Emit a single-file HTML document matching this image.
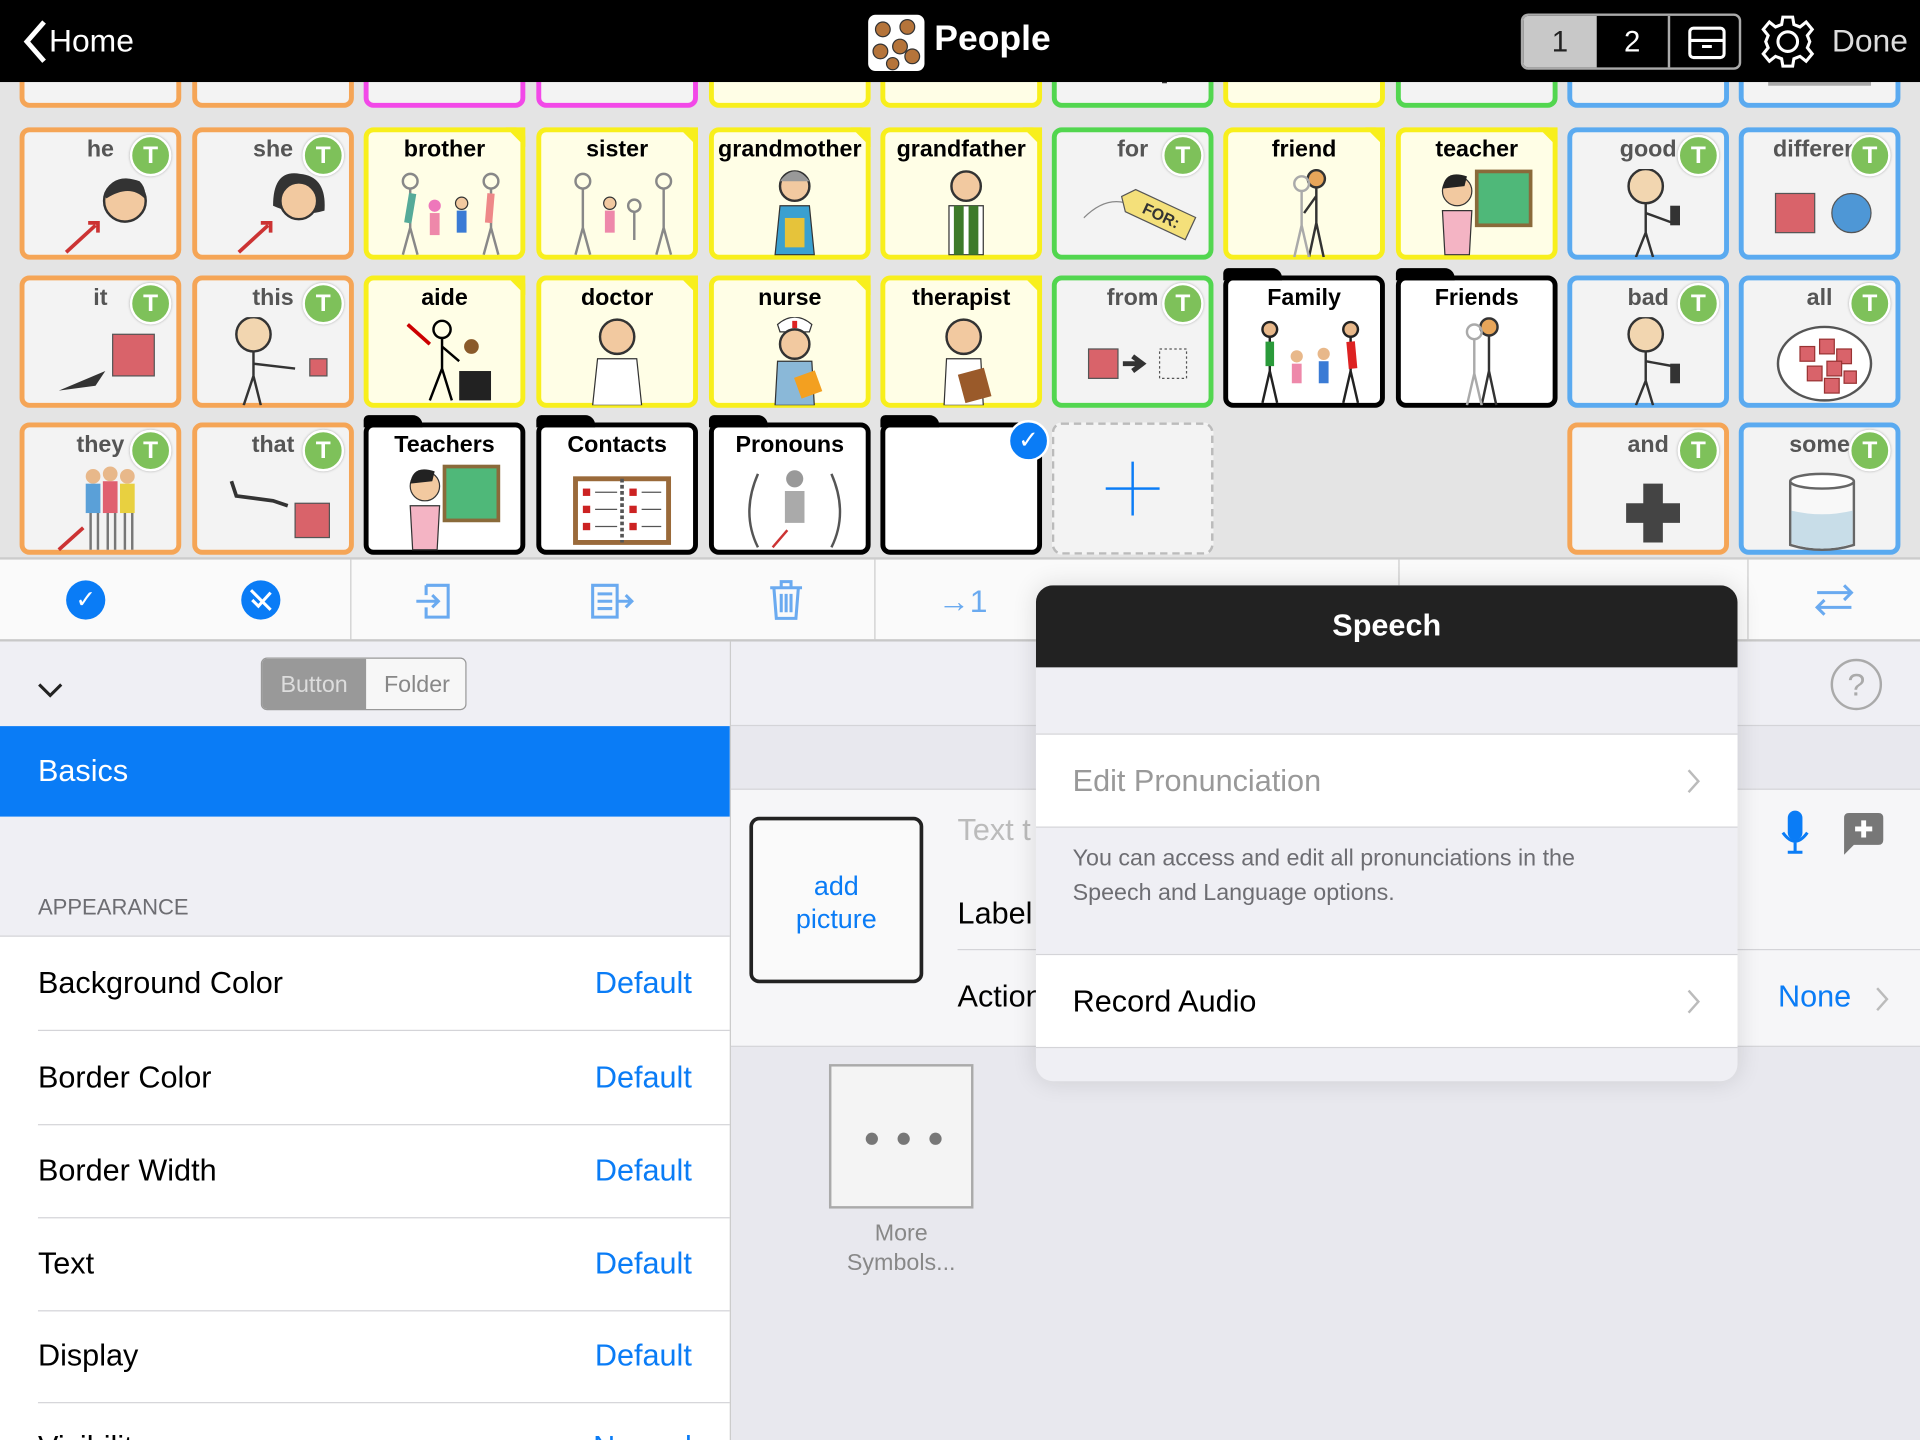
<!DOCTYPE html>
<html><head><meta charset="utf-8">
<style>
html,body{margin:0;padding:0;width:1920px;height:1440px;overflow:hidden;background:#e6e6e6}
#w{position:absolute;left:0;top:0;width:1568px;height:1176px;transform:scale(1.22449);transform-origin:0 0;overflow:hidden;font-family:"Liberation Sans",sans-serif;background:#e4e4e4}
.a{position:absolute}
.c{position:absolute;width:124px;height:100px;border:4px solid #f4a55a;border-radius:8px;background:#f3f3f3;box-sizing:content-box}
.c .l{position:absolute;left:0;right:0;top:4px;text-align:center;font-weight:bold;font-size:19px;color:#000}
.o{border-color:#f5a556}.o .l,.g .l,.b .l{color:#555}
.y{border-color:#f8ef1c;background:#fffee6}
.p{border-color:#f248e8;background:#f3f3f3}
.g{border-color:#52d64f}
.b{border-color:#5aaaf0}
.f{border-color:#000;background:#fff}
.f:before{content:"";position:absolute;left:-4px;top:-10px;width:48px;height:10px;background:#000;border-radius:4px 8px 0 0}
.t{position:absolute;right:4px;top:2px;width:30px;height:30px;border-radius:50%;background:#7ec15a;border:2px solid #fff;color:#fff;font-weight:bold;font-size:20px;text-align:center;line-height:30px;box-shadow:0 0 2px #aaa}
.y:after{content:"";position:absolute;right:-4px;top:-4px;border-style:solid;border-width:0 16px 16px 0;border-color:transparent #f8ef1c transparent transparent;transform:scaleX(1)}
svg.i{position:absolute;left:22px;top:30px}
.row{position:absolute;left:31px;width:565px;height:76px;border-bottom:1px solid #d4d4d8;font-size:25px;line-height:76px;color:#000}
.row span{position:absolute;right:31px;color:#0a7cf6}
</style></head><body><div id="w">

<!-- top partial row -->
<div class="c o" style="left:16px;top:-20px"></div>
<div class="c o" style="left:157px;top:-20px"></div>
<div class="c p" style="left:297px;top:-20px"><div class="a" style="left:82px;top:60px;width:22px;height:20px;background:#d9575a"></div></div>
<div class="c p" style="left:438px;top:-20px"><div class="a" style="left:60px;top:58px;width:24px;height:18px;background:#d9575a;transform:rotate(30deg)"></div></div>
<div class="c y" style="left:579px;top:-20px"></div>
<div class="c y" style="left:719px;top:-20px"></div>
<div class="c g" style="left:859px;top:-20px"><div class="a" style="left:86px;top:60px;width:4px;height:24px;background:#333"></div></div>
<div class="c y" style="left:999px;top:-20px"><div class="a" style="left:64px;top:58px;width:16px;height:22px;background:#d9575a"></div></div>
<div class="c g" style="left:1140px;top:-20px"><div class="a" style="left:46px;top:64px;width:36px;height:10px;background:#444"></div></div>
<div class="c b" style="left:1280px;top:-20px"><div class="a" style="left:70px;top:60px;width:24px;height:22px;border-radius:50%;background:#f4e88a"></div></div>
<div class="c b" style="left:1420px;top:-20px"><div class="a" style="left:20px;top:56px;width:84px;height:30px;background:#aaa"></div></div>

<!-- row 2 -->
<div class="c o" style="left:16px;top:104px"><div class="l">he</div><div class="t">T</div>
<svg class="i" width="90" height="70"><circle cx="60" cy="26" r="17" fill="#f2c9a0" stroke="#333" stroke-width="2"/><path d="M43 22 Q50 2 72 10 Q78 16 76 24 Q64 12 45 24Z" fill="#333"/><path d="M12 68 L36 46" stroke="#c33" stroke-width="3"/><path d="M30 44 L38 44 L38 52" fill="none" stroke="#c33" stroke-width="3"/></svg></div>
<div class="c o" style="left:157px;top:104px"><div class="l">she</div><div class="t">T</div>
<svg class="i" width="90" height="70"><path d="M40 30 Q40 0 62 4 Q84 6 82 34 Q62 40 40 30Z" fill="#333"/><circle cx="61" cy="26" r="15" fill="#f2c9a0" stroke="#333" stroke-width="2"/><path d="M12 68 L36 46" stroke="#c33" stroke-width="3"/><path d="M30 44 L38 44 L38 52" fill="none" stroke="#c33" stroke-width="3"/></svg></div>
<div class="c y" style="left:297px;top:104px"><div class="l">brother</div>
<svg class="i" width="90" height="72"><g stroke="#888" stroke-width="2" fill="none"><circle cx="12" cy="10" r="6"/><path d="M12 16 V48 M12 48 L6 70 M12 48 L18 70"/><circle cx="78" cy="10" r="6"/><path d="M78 16 V48 M78 48 L72 70 M78 48 L84 70"/></g><circle cx="32" cy="30" r="5" fill="#e7b"/><rect x="28" y="36" width="8" height="18" fill="#e8a"/><circle cx="54" cy="28" r="5" fill="#f2c9a0" stroke="#333"/><rect x="50" y="34" width="8" height="18" fill="#3a7bd5"/><path d="M14 20 L10 44" stroke="#5a9" stroke-width="6"/><path d="M78 20 L76 44" stroke="#e88" stroke-width="6"/></svg></div>
<div class="c y" style="left:438px;top:104px"><div class="l">sister</div>
<svg class="i" width="90" height="72"><g stroke="#888" stroke-width="2" fill="none"><circle cx="12" cy="10" r="6"/><path d="M12 16 V48 M12 48 L6 70 M12 48 L18 70"/><circle cx="78" cy="10" r="6"/><path d="M78 16 V48 M78 48 L72 70 M78 48 L84 70"/><circle cx="54" cy="30" r="5"/><path d="M54 35 V58"/></g><circle cx="34" cy="28" r="5" fill="#f2c9a0" stroke="#333"/><rect x="30" y="34" width="8" height="18" fill="#e8a"/></svg></div>
<div class="c y" style="left:579px;top:104px"><div class="l">grandmother</div>
<svg class="i" width="90" height="72"><circle cx="44" cy="14" r="12" fill="#f2c9a0" stroke="#333" stroke-width="2"/><path d="M32 10 Q44 -6 56 10" fill="#999"/><path d="M32 30 L56 30 L60 70 L28 70Z" fill="#3aa0d0" stroke="#333"/><rect x="36" y="40" width="16" height="24" fill="#e6c33a"/></svg></div>
<div class="c y" style="left:719px;top:104px"><div class="l">grandfather</div>
<svg class="i" width="90" height="72"><circle cx="44" cy="14" r="12" fill="#f2c9a0" stroke="#333" stroke-width="2"/><path d="M30 30 L58 30 L58 70 L30 70Z" fill="#fff" stroke="#333"/><path d="M34 30 L42 30 L42 70 L34 70Z M46 30 L54 30 L54 70 L46 70Z" fill="#3d7a2a"/></svg></div>
<div class="c g" style="left:859px;top:104px"><div class="l">for</div><div class="t">T</div>
<svg class="i" width="100" height="70"><path d="M0 40 Q20 20 40 30" stroke="#888" fill="none"/><g transform="rotate(25 60 36)"><path d="M36 26 L90 26 L90 46 L36 46 L28 36Z" fill="#f4e07a" stroke="#555"/><text x="48" y="41" font-size="13" font-weight="bold" fill="#333" font-family="Liberation Sans">FOR:</text></g></svg></div>
<div class="c y" style="left:999px;top:104px"><div class="l">friend</div>
<svg class="i" width="90" height="72"><g stroke="#333" stroke-width="2" fill="none"><circle cx="50" cy="8" r="7" fill="#e8a65a"/><path d="M50 15 V44 L44 72 M50 44 L56 72 M50 22 L40 36"/><circle cx="38" cy="12" r="6" stroke="#aaa"/><path d="M38 18 V46 L32 72 M38 46 L44 72" stroke="#aaa"/></g></svg></div>
<div class="c y" style="left:1140px;top:104px"><div class="l">teacher</div>
<svg class="i" width="90" height="72"><rect x="40" y="2" width="44" height="44" fill="#4fb879" stroke="#8a6a3a" stroke-width="3"/><circle cx="24" cy="18" r="12" fill="#f2c9a0" stroke="#333"/><path d="M12 16 Q14 0 32 6 L30 14Z" fill="#222"/><path d="M12 34 L36 34 L34 70 L14 70Z" fill="#f4b4c4" stroke="#333"/></svg></div>
<div class="c b" style="left:1280px;top:104px"><div class="l">good</div><div class="t">T</div>
<svg class="i" width="90" height="72"><g stroke="#333" stroke-width="2" fill="none"><circle cx="38" cy="14" r="14" fill="#f2d6b0"/><path d="M38 28 V52 L30 72 M38 52 L44 72 M38 36 L60 44"/></g><rect x="58" y="30" width="8" height="16" fill="#333"/></svg></div>
<div class="c b" style="left:1420px;top:104px"><div class="l">different</div><div class="t">T</div>
<svg class="i" width="90" height="72"><rect x="4" y="20" width="32" height="32" fill="#d9636a" stroke="#555"/><ellipse cx="66" cy="36" rx="16" ry="16" fill="#4e97d6" stroke="#555"/></svg></div>

<!-- row 3 -->
<div class="c o" style="left:16px;top:225px"><div class="l">it</div><div class="t">T</div>
<svg class="i" width="90" height="72"><rect x="50" y="14" width="34" height="34" fill="#d9636a" stroke="#555"/><path d="M6 60 L44 44 L36 56Z" fill="#333"/></svg></div>
<div class="c o" style="left:157px;top:225px"><div class="l">this</div><div class="t">T</div>
<svg class="i" width="90" height="72"><g stroke="#333" stroke-width="2" fill="none"><circle cx="24" cy="14" r="14" fill="#f2d6b0"/><path d="M24 28 V48 L16 72 M24 48 L30 72 M24 38 L58 42"/></g><rect x="70" y="34" width="14" height="14" fill="#d9636a" stroke="#555"/></svg></div>
<div class="c y" style="left:297px;top:225px"><div class="l">aide</div>
<svg class="i" width="90" height="72"><g stroke="#000" stroke-width="2" fill="none"><circle cx="38" cy="10" r="7"/><path d="M38 17 V42 L28 68 M38 42 L46 68 M38 24 L52 36 M10 6 L28 22" /></g><path d="M10 6 L28 22" stroke="#c00" stroke-width="3"/><circle cx="62" cy="24" r="6" fill="#8a5a2a"/><rect x="52" y="44" width="26" height="24" fill="#222"/></svg></div>
<div class="c y" style="left:438px;top:225px"><div class="l">doctor</div>
<svg class="i" width="90" height="72"><circle cx="40" cy="16" r="14" fill="#f2c9a0" stroke="#333" stroke-width="2"/><path d="M24 34 L56 34 L60 72 L20 72Z" fill="#fff" stroke="#333"/></svg></div>
<div class="c y" style="left:579px;top:225px"><div class="l">nurse</div>
<svg class="i" width="90" height="72"><path d="M30 6 Q44 -6 58 6 L56 12 L32 12Z" fill="#fff" stroke="#333"/><path d="M42 3 h4 v6 h-4z" fill="#d22"/><circle cx="44" cy="22" r="12" fill="#f2c9a0" stroke="#333" stroke-width="2"/><path d="M30 36 L58 36 L60 72 L28 72Z" fill="#8ab8d8" stroke="#333"/><rect x="46" y="46" width="18" height="18" fill="#f3a020" transform="rotate(-20 55 55)"/></svg></div>
<div class="c y" style="left:719px;top:225px"><div class="l">therapist</div>
<svg class="i" width="90" height="72"><circle cx="42" cy="16" r="14" fill="#f2c9a0" stroke="#333" stroke-width="2"/><path d="M28 34 L56 34 L58 72 L26 72Z" fill="#fff" stroke="#333"/><rect x="40" y="44" width="22" height="24" fill="#9a5a2a" transform="rotate(-15 50 56)"/></svg></div>
<div class="c g" style="left:859px;top:225px"><div class="l">from</div><div class="t">T</div>
<svg class="i" width="90" height="72"><rect x="4" y="26" width="24" height="24" fill="#d9636a" stroke="#555"/><path d="M32 38 H46 M40 32 L48 38 L40 44" stroke="#333" stroke-width="4" fill="none"/><rect x="62" y="26" width="22" height="24" fill="none" stroke="#555" stroke-dasharray="2 2"/></svg></div>
<div class="c f" style="left:999px;top:225px"><div class="l">Family</div>
<svg class="i" width="90" height="72"><g stroke="#222" stroke-width="2" fill="none"><circle cx="12" cy="10" r="6" fill="#e8b88a"/><path d="M12 16 V44 L6 70 M12 44 L18 70"/><circle cx="78" cy="10" r="6" fill="#e8b88a"/><path d="M78 16 V44 L72 70 M78 44 L84 70"/></g><path d="M12 20 V40" stroke="#2a9a3a" stroke-width="7"/><path d="M78 20 L80 42" stroke="#d22" stroke-width="7"/><circle cx="34" cy="32" r="5" fill="#e8b88a"/><rect x="30" y="38" width="8" height="16" fill="#e8a"/><circle cx="56" cy="30" r="5" fill="#e8b88a"/><rect x="52" y="36" width="8" height="18" fill="#3a7bd5"/></svg></div>
<div class="c f" style="left:1140px;top:225px"><div class="l">Friends</div>
<svg class="i" width="90" height="72"><g stroke="#333" stroke-width="2" fill="none"><circle cx="50" cy="8" r="7" fill="#e8a65a"/><path d="M50 15 V44 L44 72 M50 44 L56 72"/><circle cx="38" cy="12" r="6" stroke="#aaa"/><path d="M38 18 V46 L32 72 M38 46 L44 72" stroke="#aaa"/></g></svg></div>
<div class="c b" style="left:1280px;top:225px"><div class="l">bad</div><div class="t">T</div>
<svg class="i" width="90" height="72"><g stroke="#333" stroke-width="2" fill="none"><circle cx="38" cy="14" r="14" fill="#f2d6b0"/><path d="M38 28 V52 L30 72 M38 52 L44 72 M38 36 L60 40"/></g><rect x="58" y="38" width="8" height="16" fill="#333"/></svg></div>
<div class="c b" style="left:1420px;top:225px"><div class="l">all</div><div class="t">T</div>
<svg class="i" width="90" height="72"><ellipse cx="44" cy="38" rx="38" ry="30" fill="#fff" stroke="#555" stroke-width="2"/><g fill="#d9636a" stroke="#933"><rect x="24" y="24" width="12" height="12"/><rect x="40" y="18" width="12" height="12"/><rect x="54" y="26" width="12" height="12"/><rect x="30" y="40" width="12" height="12"/><rect x="46" y="36" width="12" height="12"/><rect x="44" y="50" width="12" height="12"/><rect x="60" y="44" width="10" height="10"/></g></svg></div>

<!-- row 4 -->
<div class="c o" style="left:16px;top:345px"><div class="l">they</div><div class="t">T</div>
<svg class="i" width="90" height="72"><circle cx="34" cy="10" r="6" fill="#e8b88a"/><circle cx="48" cy="8" r="6" fill="#e8b88a"/><circle cx="62" cy="10" r="6" fill="#e8b88a"/><rect x="28" y="16" width="12" height="24" fill="#5aa0d8"/><rect x="42" y="14" width="12" height="26" fill="#e06070"/><rect x="56" y="16" width="12" height="24" fill="#e8d040"/><path d="M32 40 V70 M38 40 V70 M46 40 V70 M52 40 V70 M60 40 V70 M66 40 V70" stroke="#777" stroke-width="2"/><path d="M6 70 L26 52" stroke="#c33" stroke-width="3"/></svg></div>
<div class="c o" style="left:157px;top:345px"><div class="l">that</div><div class="t">T</div>
<svg class="i" width="90" height="72"><path d="M6 14 L10 26 L40 30 L52 34" stroke="#333" stroke-width="3" fill="none"/><rect x="58" y="32" width="28" height="28" fill="#d9636a" stroke="#555"/></svg></div>
<div class="c f" style="left:297px;top:345px"><div class="l">Teachers</div>
<svg class="i" width="90" height="72"><rect x="40" y="2" width="44" height="44" fill="#4fb879" stroke="#8a6a3a" stroke-width="3"/><circle cx="24" cy="18" r="12" fill="#f2c9a0" stroke="#333"/><path d="M12 16 Q14 0 32 6 L30 14Z" fill="#222"/><path d="M12 34 L36 34 L34 70 L14 70Z" fill="#f4b4c4" stroke="#333"/></svg></div>
<div class="c f" style="left:438px;top:345px"><div class="l">Contacts</div>
<svg class="i" width="90" height="72"><rect x="4" y="10" width="80" height="56" fill="#9a6a3a"/><rect x="8" y="14" width="72" height="48" fill="#fff"/><path d="M44 12 V64" stroke="#555" stroke-width="3" stroke-dasharray="3 2"/><g fill="#c22"><rect x="12" y="20" width="6" height="6"/><rect x="12" y="34" width="6" height="6"/><rect x="12" y="48" width="6" height="6"/><rect x="50" y="20" width="6" height="6"/><rect x="50" y="34" width="6" height="6"/><rect x="50" y="48" width="6" height="6"/></g><g stroke="#555"><path d="M22 23 H40 M22 37 H40 M22 51 H40 M60 23 H76 M60 37 H76 M60 51 H76"/></g></svg></div>
<div class="c f" style="left:579px;top:345px"><div class="l">Pronouns</div>
<svg class="i" width="90" height="72"><path d="M14 8 Q0 40 14 68 M74 8 Q88 40 74 68" stroke="#555" fill="none" stroke-width="2"/><circle cx="44" cy="12" r="7" fill="#999"/><path d="M36 22 L52 22 L52 48 L36 48Z" fill="#aaa"/><path d="M26 68 L38 54" stroke="#c33" stroke-width="2"/></svg></div>
<div class="c f" style="left:719px;top:345px"><div class="a" style="right:-10px;top:-6px;width:30px;height:30px;border-radius:50%;background:#0a7cf6;border:2px solid #fff;color:#fff;font-size:20px;text-align:center;line-height:30px">✓</div></div>
<div class="a" style="left:859px;top:345px;width:128px;height:104px;border:2px dashed #bbb;border-radius:8px;background:#f3f3f3"><div class="a" style="left:42px;top:51px;width:44px;height:2px;background:#0a7cf6"></div><div class="a" style="left:63px;top:30px;width:2px;height:44px;background:#0a7cf6"></div></div>
<div class="c o" style="left:1280px;top:345px"><div class="l">and</div><div class="t">T</div>
<svg class="i" width="90" height="72"><path d="M36 16 H52 V32 H66 V48 H52 V64 H36 V48 H22 V32 H36Z" fill="#444"/></svg></div>
<div class="c b" style="left:1420px;top:345px"><div class="l">some</div><div class="t">T</div>
<svg class="i" width="90" height="72"><path d="M16 14 V66 Q42 74 68 66 V14" fill="#f8f8f8" stroke="#666" stroke-width="2"/><ellipse cx="42" cy="14" rx="26" ry="6" fill="#fff" stroke="#666" stroke-width="2"/><path d="M17 38 Q42 44 67 38 V65 Q42 73 17 65Z" fill="#c8dde8"/></svg></div>

<!-- header -->
<div class="a" style="left:0;top:0;width:1568px;height:67px;background:#000"></div>
<svg class="a" style="left:12px;top:14px" width="30" height="40"><path d="M24 4 L10 20 L24 36" stroke="#fff" stroke-width="4" fill="none"/></svg>
<div class="a" style="left:40px;top:18px;color:#fff;font-size:26px">Home</div>
<div class="a" style="left:709px;top:12px;width:46px;height:46px;background:#fff;border-radius:6px"><svg width="46" height="46"><g fill="#b5743a" stroke="#333"><circle cx="12" cy="12" r="6"/><circle cx="32" cy="10" r="6"/><circle cx="10" cy="30" r="6"/><circle cx="26" cy="26" r="6"/><circle cx="36" cy="34" r="6"/><circle cx="20" cy="40" r="5"/></g></svg></div>
<div class="a" style="left:763px;top:16px;color:#fff;font-size:29px;font-weight:bold">People</div>
<div class="a" style="left:1242px;top:11px;width:180px;height:46px;border:2px solid #aaa;border-radius:6px;box-sizing:border-box;overflow:hidden">
<div class="a" style="left:0;top:0;width:60px;height:44px;background:#c8c8c8;color:#222;font-size:24px;text-align:center;line-height:44px">1</div>
<div class="a" style="left:60px;top:0;width:60px;height:44px;color:#fff;font-size:24px;text-align:center;line-height:44px;border-right:2px solid #aaa;box-sizing:border-box">2</div>
<svg class="a" style="left:134px;top:8px" width="32" height="28"><rect x="2" y="2" width="28" height="24" rx="3" stroke="#fff" stroke-width="2.5" fill="none"/><path d="M2 12 H30 M12 17 H20" stroke="#fff" stroke-width="2.5"/></svg></div>
<svg class="a" style="left:1436px;top:10px" width="48" height="48"><g fill="none" stroke="#fff" stroke-width="2.5"><circle cx="24" cy="24" r="8"/><path d="M20 4 H28 L29 10 L34 12 L39 8 L44 14 L40 19 L42 24 L40 29 L44 34 L39 40 L34 36 L29 38 L28 44 H20 L19 38 L14 36 L9 40 L4 34 L8 29 L6 24 L8 19 L4 14 L9 8 L14 12 L19 10Z"/></g></svg>
<div class="a" style="left:1496px;top:18px;color:#ddd;font-size:26px">Done</div>

<!-- toolbar -->
<div class="a" style="left:0;top:455px;width:1568px;height:69px;background:#fafafa;border-top:2px solid #ccc;border-bottom:2px solid #c8c8c8;box-sizing:border-box"></div>
<div class="a" style="left:286px;top:457px;width:1px;height:66px;background:#ccc"></div>
<div class="a" style="left:714px;top:457px;width:1px;height:66px;background:#ccc"></div>
<div class="a" style="left:1142px;top:457px;width:1px;height:66px;background:#ccc"></div>
<div class="a" style="left:1427px;top:457px;width:1px;height:66px;background:#ccc"></div>
<div class="a" style="left:54px;top:474px;width:32px;height:32px;border-radius:50%;background:#0a7cf6;color:#fff;text-align:center;line-height:32px;font-size:20px">✓</div>
<div class="a" style="left:197px;top:474px;width:32px;height:32px;border-radius:50%;background:#0a7cf6"><svg width="32" height="32"><path d="M9 16 L14 21 L24 10 M8 8 L24 24" stroke="#fff" stroke-width="2.5" fill="none"/></svg></div>
<svg class="a" style="left:338px;top:472px" width="34" height="36"><g stroke="#6aaaf0" stroke-width="2.5" fill="none"><path d="M10 6 H28 V32 H10 V24 M10 14 V6"/><path d="M2 19 H20 M15 14 L20 19 L15 24"/></g></svg>
<svg class="a" style="left:480px;top:472px" width="40" height="36"><g stroke="#6aaaf0" stroke-width="2.5" fill="none"><path d="M4 6 H24 V32 H4Z M8 13 H20 M8 19 H20 M8 25 H20 M24 19 H36 M31 14 L36 19 L31 24"/></g></svg>
<svg class="a" style="left:626px;top:472px" width="32" height="36"><g stroke="#6aaaf0" stroke-width="2.5" fill="none"><path d="M3 8 H29 M12 8 V3 H20 V8 M6 8 L8 33 H24 L26 8 M12 13 V28 M16 13 V28 M20 13 V28"/></g></svg>
<div class="a" style="left:766px;top:476px;color:#6aaaf0;font-size:26px">→1</div>
<svg class="a" style="left:1480px;top:472px" width="36" height="36"><g stroke="#6aaaf0" stroke-width="2.5" fill="none"><path d="M4 12 H32 M26 6 L32 12 L26 18 M32 24 H4 M10 18 L4 24 L10 30"/></g></svg>

<!-- left panel -->
<div class="a" style="left:0;top:524px;width:596px;height:652px;background:#fff"></div>
<div class="a" style="left:0;top:524px;width:596px;height:69px;background:#efeff4"></div>
<svg class="a" style="left:30px;top:556px" width="22" height="16"><path d="M2 3 L11 12 L20 3" stroke="#222" stroke-width="2.5" fill="none"/></svg>
<div class="a" style="left:213px;top:537px;width:168px;height:43px;border:1px solid #999;border-radius:5px;overflow:hidden;background:#f7f7f7;font-size:19px;line-height:43px;box-sizing:border-box">
<div class="a" style="left:0;top:0;width:85px;height:43px;background:#999;color:#ddd;text-align:center">Button</div>
<div class="a" style="left:85px;top:0;width:83px;height:43px;color:#888;text-align:center">Folder</div></div>
<div class="a" style="left:0;top:593px;width:596px;height:74px;background:#0a7cf6;color:#fff;font-size:25px;line-height:74px;text-indent:31px">Basics</div>
<div class="a" style="left:0;top:667px;width:596px;height:98px;background:#efeff4;border-bottom:1px solid #d4d4d8;box-sizing:border-box"><div class="a" style="left:31px;top:64px;color:#6d6d72;font-size:18px">APPEARANCE</div></div>
<div class="row" style="top:765px">Background Color<span>Default</span></div>
<div class="row" style="top:842px">Border Color<span>Default</span></div>
<div class="row" style="top:918px">Border Width<span>Default</span></div>
<div class="row" style="top:994px">Text<span>Default</span></div>
<div class="row" style="top:1069px">Display<span>Default</span></div>
<div class="row" style="top:1144px;border:none">Visibility<span>Normal</span></div>
<div class="a" style="left:596px;top:524px;width:1px;height:652px;background:#ccc"></div>

<!-- right panel -->
<div class="a" style="left:597px;top:524px;width:971px;height:652px;background:#e8e8ee"></div>
<div class="a" style="left:597px;top:524px;width:971px;height:68px;background:#efeff4;border-bottom:1px solid #d4d4d8"></div>
<div class="a" style="left:597px;top:644px;width:971px;height:209px;background:#f6f6f8;border-top:1px solid #d4d4d8;border-bottom:1px solid #d4d4d8"></div>
<div class="a" style="left:782px;top:775px;width:786px;height:1px;background:#d4d4d8"></div>
<div class="a" style="left:1495px;top:538px;width:38px;height:38px;border:2px solid #aaa;border-radius:50%;color:#aaa;text-align:center;line-height:38px;font-size:26px">?</div>
<div class="a" style="left:612px;top:667px;width:142px;height:136px;border:3px solid #222;border-radius:8px;background:#fafafa;color:#0a7cf6;font-size:22px;text-align:center;padding-top:40px;box-sizing:border-box;line-height:27px">add<br>picture</div>
<div class="a" style="left:782px;top:664px;color:#bbb;font-size:25px">Text t</div>
<div class="a" style="left:782px;top:732px;color:#000;font-size:25px">Label</div>
<div class="a" style="left:782px;top:800px;color:#000;font-size:25px">Action</div>
<svg class="a" style="left:1452px;top:660px" width="28" height="40"><rect x="8" y="2" width="12" height="24" rx="6" fill="#0a7cf6"/><path d="M4 20 Q14 34 24 20 M14 28 V36 M8 36 H20" stroke="#0a7cf6" stroke-width="2.5" fill="none"/></svg>
<svg class="a" style="left:1500px;top:660px" width="40" height="40"><path d="M6 4 H34 Q38 4 38 8 V26 Q38 30 34 30 H14 L6 38 V8 Q6 4 10 4Z" fill="#777"/><path d="M22 10 V24 M15 17 H29" stroke="#fff" stroke-width="4"/></svg>
<div class="a" style="left:1452px;top:800px;color:#0a7cf6;font-size:25px">None</div>
<svg class="a" style="left:1530px;top:804px" width="14" height="24"><path d="M3 3 L11 12 L3 21" stroke="#bbb" stroke-width="2" fill="none"/></svg>
<div class="a" style="left:677px;top:869px;width:118px;height:118px;border:2px solid #aaa;background:#f4f4f4;box-sizing:border-box"><div class="a" style="left:28px;top:54px;font-size:0"><span style="display:inline-block;width:10px;height:10px;border-radius:50%;background:#777;margin-right:16px"></span><span style="display:inline-block;width:10px;height:10px;border-radius:50%;background:#777;margin-right:16px"></span><span style="display:inline-block;width:10px;height:10px;border-radius:50%;background:#777"></span></div></div>
<div class="a" style="left:660px;top:996px;width:152px;text-align:center;color:#888;font-size:19px;line-height:24px">More<br>Symbols...</div>

<!-- popover -->
<div class="a" style="left:846px;top:478px;width:573px;height:405px;border-radius:14px;overflow:hidden;background:#efeff4;box-shadow:0 0 20px rgba(0,0,0,.12)">
<div class="a" style="left:0;top:0;width:573px;height:67px;background:#222;color:#fff;font-size:25px;font-weight:bold;text-align:center;line-height:67px">Speech</div>
<div class="a" style="left:0;top:121px;width:573px;height:77px;background:#fff;border-top:1px solid #d4d4d8;border-bottom:1px solid #d4d4d8;box-sizing:border-box;color:#999;font-size:25px;line-height:76px;text-indent:30px">Edit Pronunciation</div>
<svg class="a" style="left:530px;top:148px" width="14" height="24"><path d="M3 3 L11 12 L3 21" stroke="#bbb" stroke-width="2" fill="none"/></svg>
<div class="a" style="left:30px;top:210px;color:#6d6d72;font-size:19px;line-height:28px">You can access and edit all pronunciations in the<br>Speech and Language options.</div>
<div class="a" style="left:0;top:301px;width:573px;height:77px;background:#fff;border-top:1px solid #d4d4d8;border-bottom:1px solid #d4d4d8;box-sizing:border-box;color:#000;font-size:25px;line-height:76px;text-indent:30px">Record Audio</div>
<svg class="a" style="left:530px;top:328px" width="14" height="24"><path d="M3 3 L11 12 L3 21" stroke="#bbb" stroke-width="2" fill="none"/></svg>
</div>

</div></body></html>
